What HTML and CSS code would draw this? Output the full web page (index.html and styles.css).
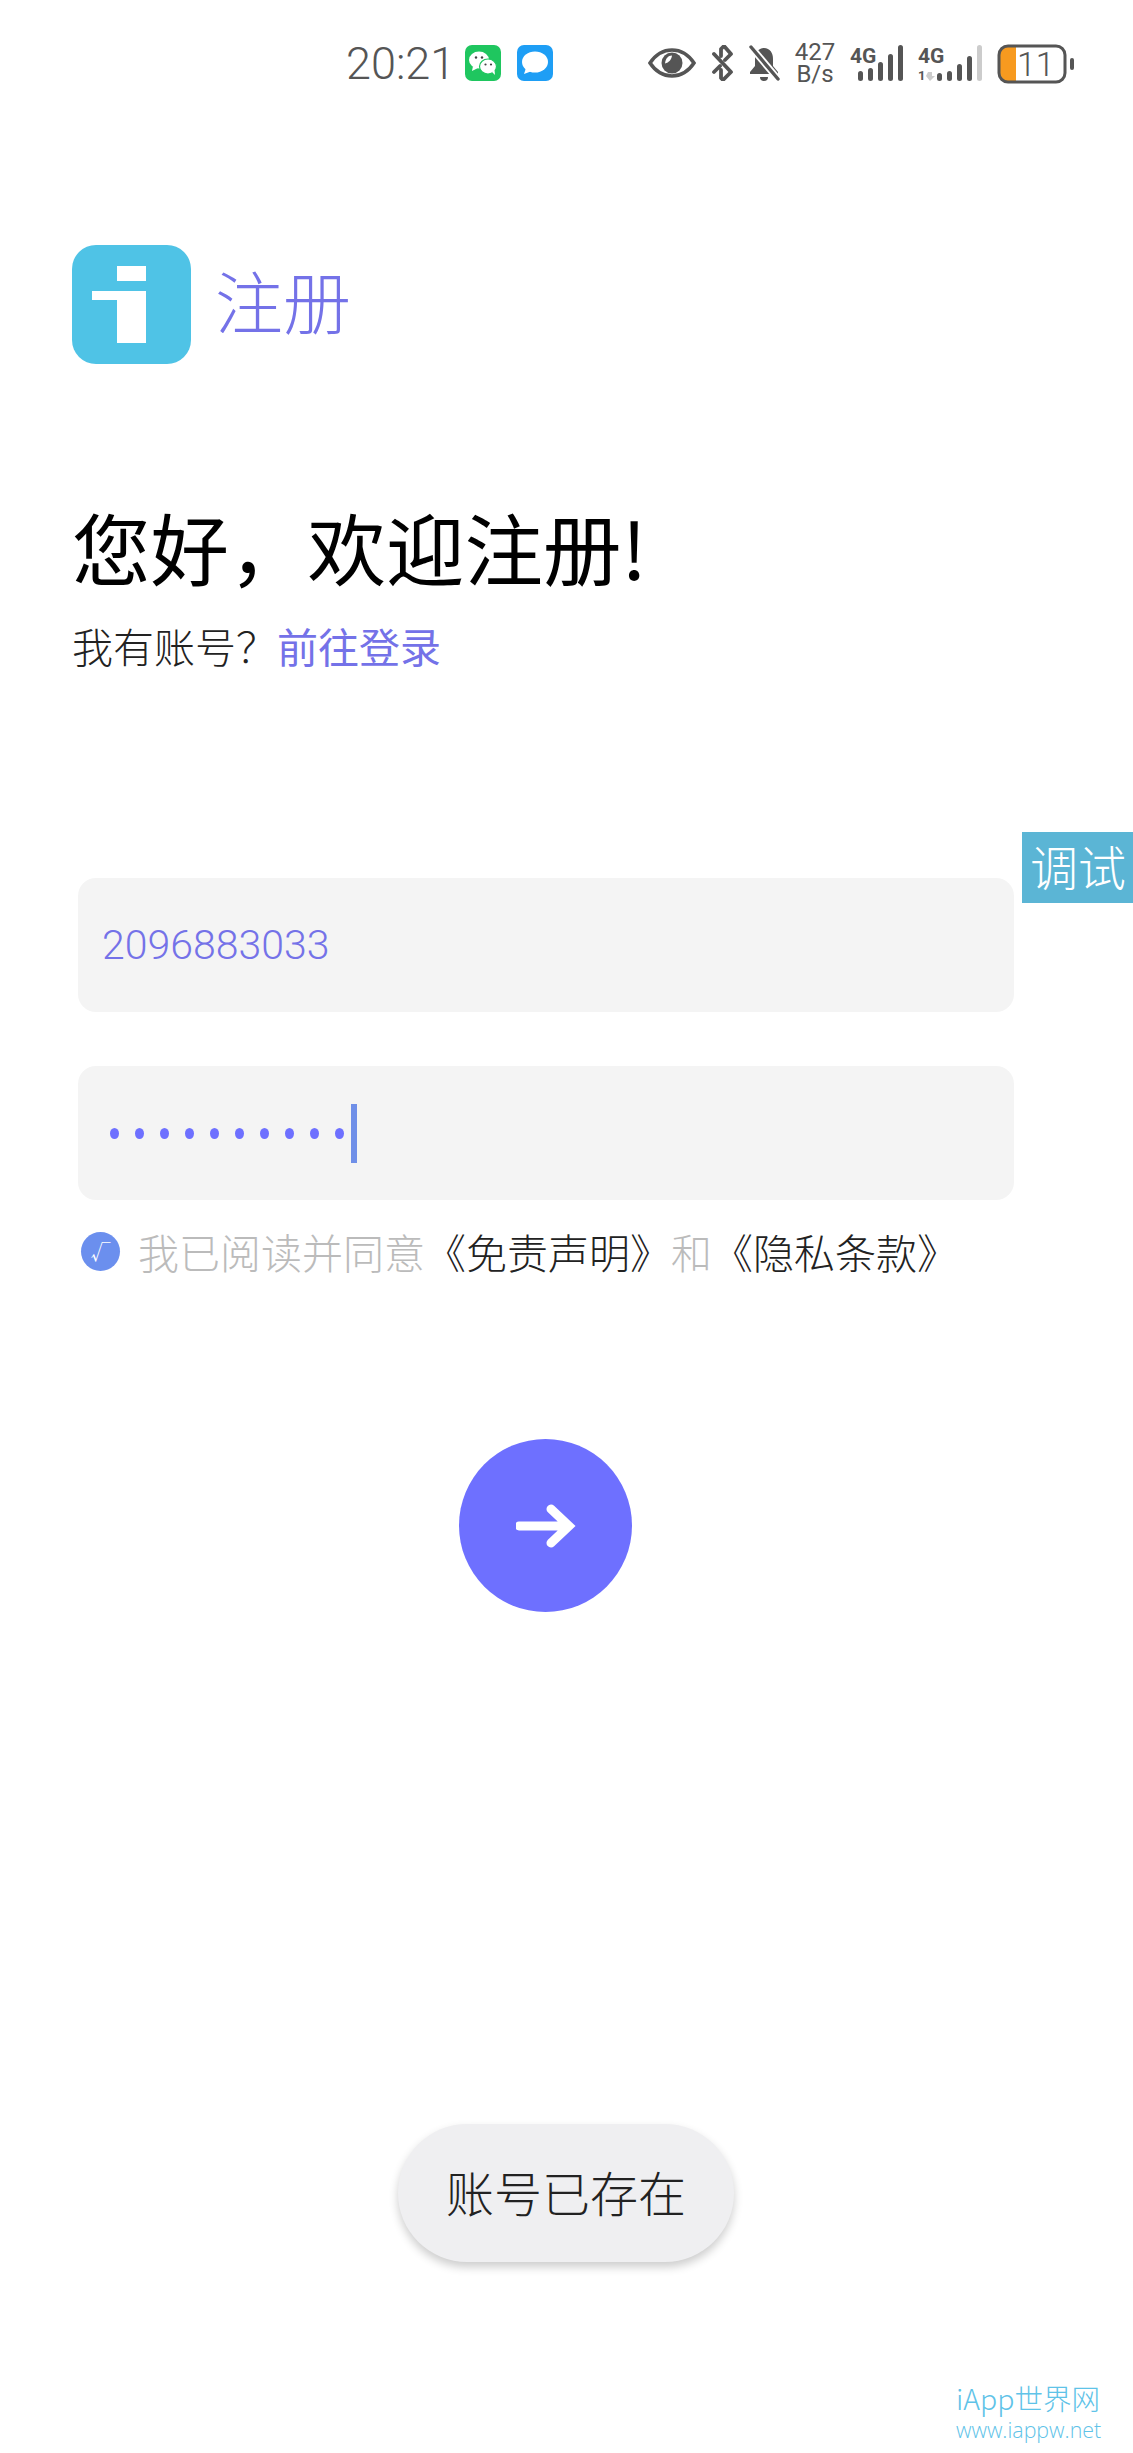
FILE: index.html
```html
<!DOCTYPE html>
<html>
<head>
  <title>注册</title>
  <link rel="stylesheet" href="styles.css">
</head>
<body>
  <div class="statusbar">
    <span class="time">20:21</span>
    <svg class="notify" width="36" height="36" viewBox="0 0 36 36">
      <rect width="36" height="36" rx="7" fill="#1fc65f"/>
      <ellipse cx="14" cy="15" rx="10" ry="8.5" fill="#fff"/>
      <path d="M8 21l-1 5 6-3z" fill="#fff"/>
      <ellipse cx="23" cy="21.5" rx="8.5" ry="7.5" fill="#fff" stroke="#1fc65f" stroke-width="1.2"/>
      <path d="M27 27l3 3-.5-5z" fill="#fff"/>
      <circle cx="11" cy="12.5" r="1.2" fill="#444"/>
      <circle cx="17" cy="12.5" r="1.2" fill="#444"/>
      <circle cx="20.5" cy="19.5" r="1.1" fill="#444"/>
      <circle cx="26" cy="19.5" r="1.1" fill="#444"/>
    </svg>
    <svg class="notify second" width="36" height="36" viewBox="0 0 36 36">
      <rect width="36" height="36" rx="7" fill="#1e9ef5"/>
      <ellipse cx="18" cy="17" rx="13" ry="10.5" fill="#fff"/>
      <path d="M9 23l-2 6 8-3z" fill="#fff"/>
    </svg>

    <div class="sysicons">
      <svg class="eye" width="48" height="30" viewBox="0 0 48 30">
        <path d="M2 15C8 6 15 2 24 2s16 4 22 13c-6 9-13 13-22 13S8 24 2 15z" fill="none" stroke="#555" stroke-width="3.6"/>
        <circle cx="24" cy="15" r="10.5" fill="#555"/>
        <path d="M24 7.500c-.5 4-3 7-7 8 .5-5 3-8 7-8z" fill="#fff"/>
      </svg>
      <svg class="bt" width="23" height="36" viewBox="0 0 23 36">
        <path d="M3 9l17 18-8 8-2-2 0-8M3 27l6-6M14 15l6-6-7-8-3 3 0 7" fill="none" stroke="#555" stroke-width="3.8" stroke-linecap="round" stroke-linejoin="round"/>
      </svg>
      <svg class="bell" width="32" height="37" viewBox="0 0 32 37">
        <path d="M16 3c6 0 9 5 9 11v7l5 6v2H2v-2l5-6v-7c0-6 3-11 9-11z" fill="#555"/>
        <path d="M12 32h8a4 4 0 0 1-8 0z" fill="#555"/>
        <path d="M3 2l27 32" stroke="#fff" stroke-width="7"/>
        <path d="M3 2l27 32" stroke="#555" stroke-width="3.400" stroke-linecap="round"/>
      </svg>
      <div class="speed">427<br>B/s</div>
      <svg class="signal" width="56" height="38" viewBox="0 0 56 38">
        <text x="0" y="19" class="net">4G</text>
        <g fill="#555">
          <rect x="8" y="27" width="5" height="10" rx="2.500"/>
          <rect x="18" y="24" width="5" height="13" rx="2.500"/>
          <rect x="28" y="18" width="5" height="19" rx="2.500"/>
          <rect x="38" y="10" width="5" height="27" rx="2.500"/>
          <rect x="48" y="1" width="5" height="36" rx="2.500"/>
        </g>
      </svg>
      <svg class="signal second" width="66" height="42" viewBox="0 0 66 42">
        <text x="1" y="19" class="net">4G</text>
        <text x="1" y="36" class="sim">1</text>
        <path d="M11 28h4v4h3l-5 5-4-5z" fill="#ccc"/>
        <g fill="#555">
          <rect x="20" y="29" width="5" height="8" rx="2.500"/>
          <rect x="30" y="27" width="5" height="10" rx="2.500"/>
          <rect x="40" y="20" width="5" height="17" rx="2.500"/>
          <rect x="50" y="12" width="5" height="25" rx="2.500"/>
        </g>
        <rect x="60" y="1" width="5" height="36" rx="2.500" fill="#ccc"/>
      </svg>
      <svg class="battery" width="78" height="42" viewBox="0 0 78 42">
        <path d="M3 10a8 8 0 0 1 8-8h8v36h-8a8 8 0 0 1-8-8z" fill="#f79a1f"/>
        <rect x="2" y="2" width="66" height="36" rx="9" fill="none" stroke="#555" stroke-width="3"/>
        <text x="20" y="32" class="level">11</text>
        <rect x="73" y="14" width="4" height="12" rx="2" fill="#555"/>
      </svg>
    </div>
  </div>

  <div class="page">
    <div class="brand">
      <div class="logo">
        <span class="logo-dot"></span>
        <div class="logo-stem"><span class="logo-arm"></span><span class="logo-body"></span></div>
      </div>
      <span class="brand-title">注册</span>
    </div>

    <h1 class="welcome">您好，欢迎注册!</h1>
    <p class="hint">我有账号？<a class="link">前往登录</a></p>

    <div class="form">
      <div class="field"><span class="value">2096883033</span></div>
      <div class="field password">
        <i></i><i></i><i></i><i></i><i></i><i></i><i></i><i></i><i></i><i></i>
        <span class="caret"></span>
      </div>
      <div class="agree">
        <span class="check">√</span>
        <span class="agree-text">我已阅读并同意<b>《免责声明》</b>和<b>《隐私条款》</b></span>
      </div>
    </div>

    <div class="submit">
      <svg width="60" height="46" viewBox="0 0 60 46">
        <path d="M3 23h50M35 6l18 17-18 17" fill="none" stroke="#fff" stroke-width="9" stroke-linecap="round" stroke-linejoin="miter"/>
      </svg>
    </div>
  </div>

  <div class="debug">调试</div>
  <div class="toast">账号已存在</div>
  <div class="watermark">
    <span class="wm-name">iApp世界网</span>
    <span class="wm-url">www.iappw.net</span>
  </div>
</body>
</html>
```

FILE: styles.css
```css
* {
  box-sizing: border-box;
}

html, body {
  margin: 0;
  padding: 0;
}

body {
  position: relative;
  width: 1133px;
  height: 2453px;
  overflow: hidden;
  background-color: #fff;
  font-family: "Noto Sans CJK SC", "Noto Sans", sans-serif;
  font-weight: 300;
}

/* status bar */
.statusbar {
  display: flex;
  align-items: center;
  height: 126px;
  padding-left: 346px;
}

.time {
  width: 119px;
  font-family: Roboto, sans-serif;
  font-size: 45px;
  font-weight: 300;
  color: #555;
}

.notify.second {
  margin-left: 16px;
}

.sysicons {
  display: flex;
  align-items: center;
  margin-left: 95px;
}

.eye {
  margin-right: 15px;
}

.bt {
  margin-right: 14px;
}

.bell {
  margin-right: 14px;
}

.speed {
  width: 42px;
  margin-right: 14px;
  font-family: Roboto, sans-serif;
  font-size: 24px;
  font-weight: 400;
  line-height: 22px;
  color: #555;
  text-align: center;
}

.signal {
  margin-right: 11px;
}

.signal.second {
  margin: 4px 14px 0 0;
}

.battery {
  margin-top: 4px;
}

.net {
  font-family: Roboto, sans-serif;
  font-size: 21px;
  font-weight: 700;
  fill: #555;
}

.sim {
  font-family: Roboto, sans-serif;
  font-size: 13px;
  font-weight: 700;
  fill: #555;
}

.level {
  font-family: Roboto, sans-serif;
  font-size: 34px;
  font-weight: 300;
  fill: #555;
}

/* page */
.page {
  display: flex;
  flex-direction: column;
  padding: 119px 0 0 72px;
}

.brand {
  display: flex;
  align-items: center;
}

.logo {
  position: relative;
  width: 119px;
  height: 119px;
  border-radius: 24px;
  background-color: #4fc3e6;
}

.logo-dot {
  position: absolute;
  left: 45px;
  top: 21px;
  width: 29px;
  height: 15px;
  background-color: #fff;
}

.logo-stem {
  position: absolute;
  left: 20px;
  top: 46px;
  width: 54px;
  height: 52px;
}

.logo-arm {
  position: absolute;
  left: 0;
  top: 0;
  width: 25px;
  height: 9px;
  background-color: #fff;
}

.logo-body {
  position: absolute;
  left: 25px;
  top: 0;
  width: 29px;
  height: 52px;
  background-color: #fff;
}

.brand-title {
  margin: 0 0 9px 24px;
  font-size: 68px;
  line-height: 80px;
  color: #7472e8;
}

.welcome {
  margin: 132px 0 0 0;
  font-size: 78.500px;
  line-height: 100px;
  font-weight: 400;
  color: #000;
}

.hint {
  margin: 19px 0 0 0;
  font-size: 41px;
  line-height: 60px;
  color: #222;
}

.link {
  color: #7472e8;
  font-weight: 400;
}

.form {
  display: flex;
  flex-direction: column;
  width: 936px;
  margin: 203px 0 0 6px;
}

.field {
  display: flex;
  align-items: center;
  height: 134px;
  padding-left: 24px;
  border-radius: 18px;
  background-color: #f4f4f4;
}

.value {
  font-family: Roboto, sans-serif;
  font-size: 41px;
  font-weight: 300;
  color: #7472e8;
}

.password {
  gap: 16px;
  margin-top: 54px;
  padding-left: 32px;
}

.password i {
  width: 9px;
  height: 11px;
  border-radius: 50%;
  background-color: #6e70ff;
}

.caret {
  width: 6px;
  height: 59px;
  margin-left: -9px;
  background-color: #6f8fe8;
}

.agree {
  display: flex;
  align-items: center;
  margin: 21px 0 0 3px;
  height: 60px;
}

.check {
  display: flex;
  align-items: center;
  justify-content: center;
  width: 39px;
  height: 39px;
  border-radius: 50%;
  background-color: #6b8fee;
  color: #fff;
  font-size: 20px;
}

.agree-text {
  margin-left: 18px;
  font-size: 41px;
  color: #bbb;
  white-space: nowrap;
}

.agree-text b {
  font-weight: 300;
  color: #222;
}

.submit {
  display: flex;
  align-items: center;
  justify-content: center;
  width: 173px;
  height: 173px;
  margin: 158px 0 0 387px;
  border-radius: 50%;
  background-color: #6e70ff;
}

/* overlays */
.debug {
  position: absolute;
  left: 1022px;
  top: 832px;
  width: 111px;
  height: 71px;
  padding-left: 8px;
  background-color: #5bb5d5;
  color: #fff;
  font-size: 48px;
  line-height: 67px;
  white-space: nowrap;
}

.toast {
  position: absolute;
  left: 398px;
  top: 2124px;
  width: 336px;
  height: 138px;
  border-radius: 69px;
  background-color: #efeff1;
  box-shadow: 0 5px 10px rgba(0, 0, 0, 0.2);
  color: #222;
  font-size: 48px;
  line-height: 134px;
  text-align: center;
}

.watermark {
  position: absolute;
  left: 956px;
  top: 2379px;
  display: flex;
  flex-direction: column;
  color: #5fc3e8;
  white-space: nowrap;
}

.wm-name {
  font-size: 28.500px;
  line-height: 38px;
}

.wm-url {
  font-family: "Open Sans", sans-serif;
  font-size: 21.400px;
  line-height: 26px;
}
```
